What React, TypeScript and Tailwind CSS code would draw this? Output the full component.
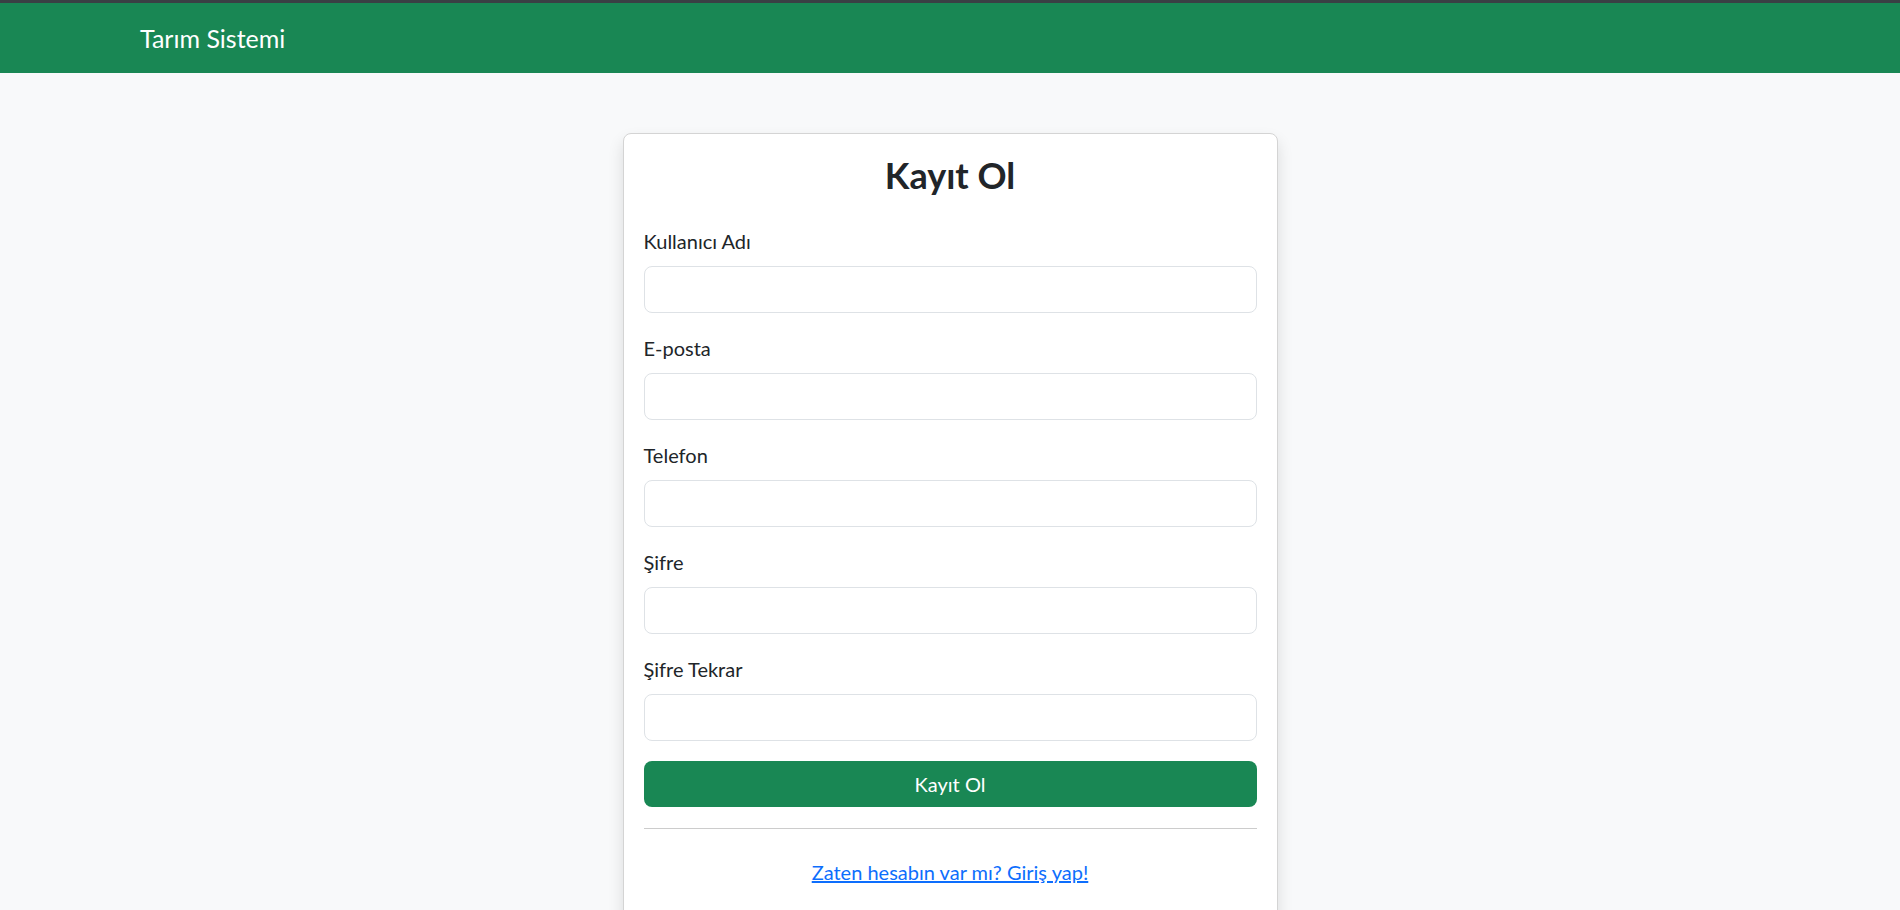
import React from 'react';

const fields = [
  { label: 'Kullanıcı Adı', type: 'text' },
  { label: 'E-posta', type: 'email' },
  { label: 'Telefon', type: 'tel' },
  { label: 'Şifre', type: 'password' },
  { label: 'Şifre Tekrar', type: 'password' },
];

const App: React.FC = () => {
  return (
    <div className="min-h-screen bg-[#f8f9fa] text-[#212529] font-['Lato',sans-serif]">
      {/* Navbar */}
      <nav className="border-t-[3px] border-[#3a3f44] bg-[#198754]">
        <div className="h-[70px] flex items-center pl-[140px]">
          <span className="text-white text-[25px] leading-none">Tarım Sistemi</span>
        </div>
      </nav>

      {/* Register card */}
      <div className="mt-[60px] w-[655px] mx-auto bg-white border border-[#d4d4d4] rounded-[8px] shadow-[0_0.5rem_1rem_rgba(0,0,0,0.12)]">
        <div className="p-5">
          <h2 className="text-center text-[36px] leading-[1.2] font-bold mb-[29px]">Kayıt Ol</h2>

          <form onSubmit={(e) => e.preventDefault()}>
            {fields.map((f) => (
              <div key={f.label} className="mb-5">
                <label className="block text-[20px] leading-[30px] mb-[10px]">{f.label}</label>
                <input
                  type={f.type}
                  className="block w-full h-[47px] px-4 bg-white border border-[#dee2e6] rounded-[8px] text-[20px] focus:outline-none"
                />
              </div>
            ))}

            <button
              type="submit"
              className="w-full h-[46px] bg-[#198754] text-white text-[20px] rounded-[8px]"
            >
              Kayıt Ol
            </button>
          </form>

          <hr className="mt-[21px] mb-[28px] border-0 border-t border-[#cccccc]" />

          <div className="text-center pb-5">
            <a href="#" className="text-[#0d6efd] underline text-[20px] leading-[30px]">
              Zaten hesabın var mı? Giriş yap!
            </a>
          </div>
        </div>
      </div>
    </div>
  );
};

export default App;
